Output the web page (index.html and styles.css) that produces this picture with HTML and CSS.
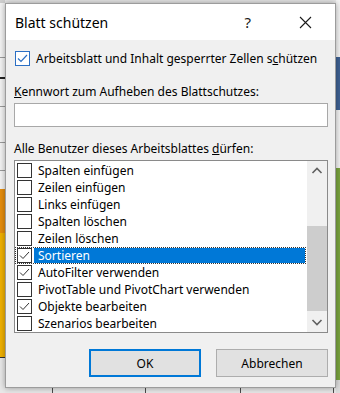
FILE: index.html
```html
<!DOCTYPE html>
<html lang="de">
<head>
  <meta charset="UTF-8">
  <title>Blatt schützen</title>
  <link rel="stylesheet" href="styles.css">
</head>
<body>
  <div class="sheet">
    <div class="dialog">
      <div class="titlebar">
        <span class="title">Blatt schützen</span>
        <span class="help">?</span>
        <svg class="close" width="13" height="13" viewBox="0 0 13 13"><path d="M1 1L12 12M12 1L1 12" stroke="#1a1a1a" stroke-width="1.1" fill="none"/></svg>
      </div>
      <div class="body">
        <div class="check-row">
          <span class="box box-main">
            <svg width="13" height="13" viewBox="0 0 13 13"><path d="M2 6.5L5 9.5L11 3" stroke="#2b6fc4" stroke-width="1.2" fill="none"/></svg>
          </span>
          <span>Arbeitsblatt und Inhalt gesperrter Zellen s<u>c</u>hützen</span>
        </div>
        <div class="label label-pw"><u>K</u>ennwort zum Aufheben des Blattschutzes:</div>
        <div class="input"></div>
        <div class="label label-list">Alle Benutzer dieses Arbeitsblattes <u>d</u>ürfen:</div>

        <div class="listbox">
          <div class="items">
            <div class="item"><span class="box"></span><span class="item-text">Spalten einfügen</span></div>
            <div class="item"><span class="box"></span><span class="item-text">Zeilen einfügen</span></div>
            <div class="item"><span class="box"></span><span class="item-text">Links einfügen</span></div>
            <div class="item"><span class="box"></span><span class="item-text">Spalten löschen</span></div>
            <div class="item"><span class="box"></span><span class="item-text">Zeilen löschen</span></div>
            <div class="item selected">
              <span class="box"><svg width="13" height="13" viewBox="0 0 13 13"><path d="M2 6.5L5 9.5L11 3" stroke="#333" stroke-width="1" fill="none"/></svg></span>
              <span class="item-text">Sortieren</span>
            </div>
            <div class="item">
              <span class="box"><svg width="13" height="13" viewBox="0 0 13 13"><path d="M2 6.5L5 9.5L11 3" stroke="#333" stroke-width="1" fill="none"/></svg></span>
              <span class="item-text">AutoFilter verwenden</span>
            </div>
            <div class="item"><span class="box"></span><span class="item-text">PivotTable und PivotChart verwenden</span></div>
            <div class="item">
              <span class="box"><svg width="13" height="13" viewBox="0 0 13 13"><path d="M2 6.5L5 9.5L11 3" stroke="#333" stroke-width="1" fill="none"/></svg></span>
              <span class="item-text">Objekte bearbeiten</span>
            </div>
            <div class="item"><span class="box"></span><span class="item-text">Szenarios bearbeiten</span></div>
          </div>
          <div class="scrollbar">
            <svg class="arrow" width="20" height="20" viewBox="0 0 20 20"><path d="M5.5 12L10 7.5L14.5 12" stroke="#606060" stroke-width="1.6" fill="none"/></svg>
            <div class="track"><div class="thumb"></div></div>
            <svg class="arrow" width="20" height="20" viewBox="0 0 20 20"><path d="M5.5 8L10 12.5L14.5 8" stroke="#606060" stroke-width="1.6" fill="none"/></svg>
          </div>
        </div>

        <div class="buttons">
          <button class="btn btn-default">OK</button>
          <button class="btn">Abbrechen</button>
        </div>
      </div>
    </div>
  </div>
</body>
</html>
```

FILE: styles.css
```css
/* Seite und Tabellenhintergrund */
html, body {
  margin: 0;
  padding: 0;
}
body {
  width: 340px;
  height: 393px;
  overflow: hidden;
  font-family: "Noto Sans", "Open Sans", sans-serif;
  font-size: 12px;
  color: #000;
}
.sheet {
  width: 340px;
  height: 393px;
  box-sizing: border-box;
  padding: 3px 4px 0 5px;
  background:
    linear-gradient(to right, transparent 52px, #4a4a4a 52px, #4a4a4a 53px, transparent 53px,
      transparent 145px, #4a4a4a 145px, #4a4a4a 146px, transparent 146px,
      transparent 240px, #4a4a4a 240px, #4a4a4a 241px, transparent 241px,
      transparent 333px, #4a4a4a 333px, #4a4a4a 334px, transparent 334px) left bottom / 340px 6px no-repeat,
    linear-gradient(to bottom, #f3f3f3 0, #f3f3f3 57px, #3e6193 57px, #3e6193 110px, #f3f3f3 110px,
      #f3f3f3 168px, #7aa43e 168px, #7aa43e 380px, #dcdcdc 380px) right top / 4px 100% no-repeat,
    linear-gradient(to bottom, #cfcfcf 0, #cfcfcf 3px, #f3f3f3 3px, #f3f3f3 57px, #9a9a9a 57px, #9a9a9a 58px,
      #f3f3f3 58px, #f3f3f3 77px, #222 77px, #222 79px, #f3f3f3 79px, #f3f3f3 106px, #9a9a9a 106px,
      #9a9a9a 107px, #f3f3f3 107px, #f3f3f3 142px, #9a9a9a 142px, #9a9a9a 143px, #f3f3f3 143px,
      #f3f3f3 170px, #9a9a9a 170px, #9a9a9a 171px, #f3f3f3 171px,
      #f3f3f3 189px, #e58d0d 189px, #e58d0d 233px, #efb000 233px, #efb000 357px, #333 357px,
      #333 358px, #e8e8e8 358px) left top / 5px 100% no-repeat,
    #e6e6e6;
}

/* Dialogfenster */
.dialog {
  width: 331px;
  height: 385px;
  box-sizing: border-box;
  border: 1px solid #9c9c9c;
  background: #f0f0f0;
  box-shadow: 0 0 6px rgba(0, 0, 0, 0.35);
  display: flex;
  flex-direction: column;
}
.titlebar {
  height: 36px;
  background: #fff;
  display: flex;
  align-items: center;
  padding-left: 9px;
  flex-shrink: 0;
}
.title {
  font-size: 14px;
  flex: 1;
  padding-top: 1px;
}
.help {
  font-size: 15px;
  color: #1a1a1a;
  margin-right: 48px;
}
.close {
  margin-right: 23px;
}

.body {
  padding: 11px 0 0 8px;
}
.check-row {
  display: flex;
  align-items: center;
  height: 15px;
  gap: 6px;
  margin-left: 1px;
}
.box {
  width: 15px;
  height: 15px;
  box-sizing: border-box;
  border: 1px solid #333;
  background: #fff;
  display: flex;
  align-items: center;
  justify-content: center;
  flex-shrink: 0;
}
.box-main {
  border-color: #2b6fc4;
}
.label {
  line-height: 16px;
}
.label-pw {
  margin-top: 18px;
}
.input {
  margin-top: 3px;
  width: 314px;
  height: 24px;
  box-sizing: border-box;
  border: 1px solid #a8a8a8;
  background: #fff;
}
.label-list {
  margin-top: 14px;
}

/* Liste mit Kontrollkästchen */
.listbox {
  margin-top: 3px;
  width: 314px;
  height: 173px;
  box-sizing: border-box;
  border: 1px solid #8a8a8a;
  background: #fff;
  display: flex;
  overflow: hidden;
}
.items {
  flex: 1;
  padding-top: 1px;
  padding-right: 1px;
}
.item {
  height: 17px;
  display: flex;
  align-items: center;
  padding-left: 1px;
  box-sizing: border-box;
  border: 1px dotted transparent;
}
.item .box {
  width: 15px;
  height: 15px;
}
.item-text {
  margin-left: 2px;
  padding-left: 4px;
  line-height: 15px;
  flex: 1;
  white-space: nowrap;
}
.selected {
  border-color: #333;
}
.selected .item-text {
  background: #0078d7;
  color: #fff;
}
.scrollbar {
  width: 20px;
  background: #f0f0f0;
  display: flex;
  flex-direction: column;
}
.arrow {
  flex-shrink: 0;
}
.track {
  flex: 1;
  padding-top: 45px;
  padding-bottom: 1px;
  display: flex;
  flex-direction: column;
}
.thumb {
  flex: 1;
  background: #cdcdcd;
}

/* Schaltflächen */
.buttons {
  margin-top: 16px;
  width: 314px;
  display: flex;
  justify-content: flex-end;
  gap: 15px;
}
.btn {
  width: 112px;
  height: 28px;
  box-sizing: border-box;
  border: 1px solid #adadad;
  background: #e1e1e1;
  font-family: inherit;
  font-size: 12px;
  color: #000;
  padding: 0;
}
.btn-default {
  border: 2px solid #0078d7;
}
```
